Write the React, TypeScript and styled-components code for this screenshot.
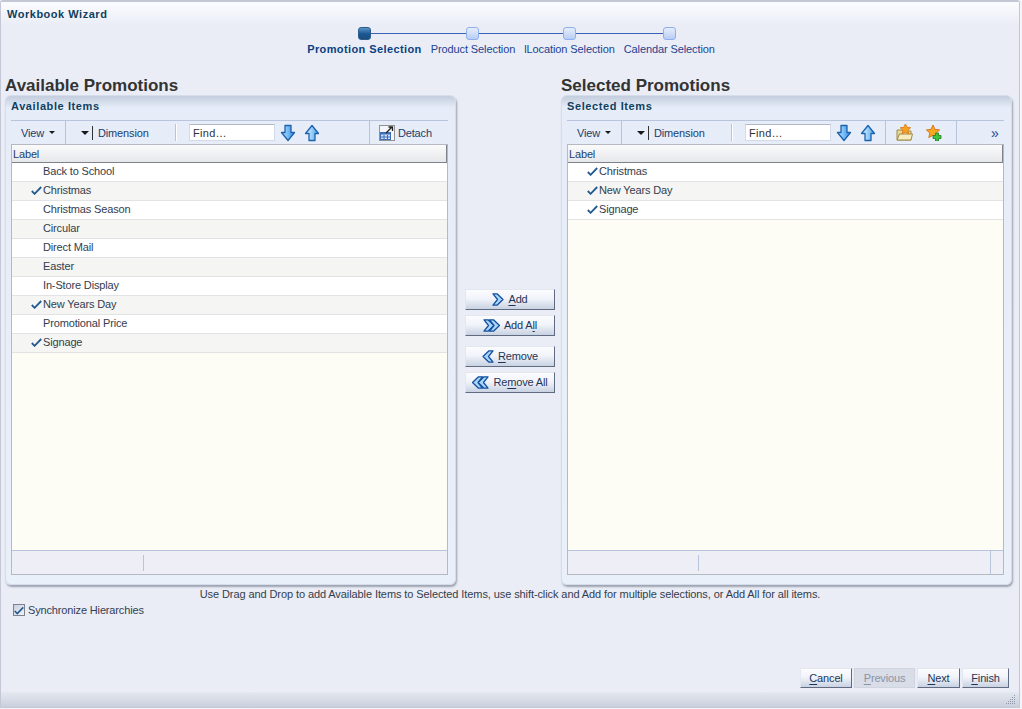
import React from "react";
import styled, { createGlobalStyle } from "styled-components";

const GlobalStyle = createGlobalStyle`
  html, body {
    margin: 0;
    padding: 0;
    background: #f4f5fa;
  }
  body {
    font-family: "Liberation Sans", Arial, sans-serif;
    font-size: 11px;
    letter-spacing: -0.15px;
  }
`;

const ArrowDown = () => (
  <svg width="16" height="18" viewBox="0 0 16 18">
    <defs>
      <linearGradient id="arrowBlue" x1="0" y1="0" x2="1" y2="0">
        <stop offset="0" stopColor="#bfe4ff" />
        <stop offset="1" stopColor="#2f8fe8" />
      </linearGradient>
    </defs>
    <path
      d="M5 1.500h6v7h3.500L8 16.500 1.500 8.500H5z"
      fill="url(#arrowBlue)"
      stroke="#1d62ad"
      strokeWidth="1.3"
      strokeLinejoin="round"
    />
  </svg>
);

const ArrowUp = () => (
  <svg width="16" height="18" viewBox="0 0 16 18">
    <defs>
      <linearGradient id="arrowPale" x1="0" y1="0" x2="1" y2="0">
        <stop offset="0" stopColor="#e2f4ff" />
        <stop offset="1" stopColor="#4ba6f0" />
      </linearGradient>
    </defs>
    <path
      d="M5 16.500h6v-7h3.500L8 1.500 1.500 9.500H5z"
      fill="url(#arrowPale)"
      stroke="#1d62ad"
      strokeWidth="1.3"
      strokeLinejoin="round"
    />
  </svg>
);

const DetachIcon = () => (
  <svg width="16" height="16" viewBox="0 0 16 16">
    <rect x="0.500" y="0.500" width="15" height="15" fill="#f4f6fb" stroke="#333" strokeDasharray="1 1" />
    <rect x="1.500" y="7.500" width="10" height="7" fill="#cfe0f8" stroke="#3c6fb8" />
    <rect x="1.500" y="7.500" width="10" height="2" fill="#3c6fb8" />
    <path d="M5 10v4M8.500 10v4M2 12h9" stroke="#3c6fb8" fill="none" />
    <path d="M7 8l6-6M9.500 2h4v4" stroke="#222" strokeWidth="1.3" fill="none" />
  </svg>
);

const starPath = "M8 1l2 4.400 4.600.5-3.400 3.100 1 4.600L8 11.200 3.800 13.600l1-4.600L1.400 5.900l4.600-.5z";

const StarFolderIcon = () => (
  <svg width="17" height="17" viewBox="0 0 17 17">
    <path d="M1 6h5l1 1h8v9H1z" fill="#e8d89a" stroke="#a08a45" />
    <path d="M1 16l2.500-6H16.500L15 16z" fill="#f6ecc0" stroke="#a08a45" />
    <path d={starPath} transform="translate(3 -1) scale(.8)" fill="#f7a21f" stroke="#d9761a" />
  </svg>
);

const StarAddIcon = () => (
  <svg width="17" height="17" viewBox="0 0 17 17">
    <path d={starPath} fill="#f7a81f" stroke="#d9761a" />
    <path d="M10.500 9h3v2.500H16v3h-2.500V17h-3v-2.500H8v-3h2.500z" fill="#3fc43a" stroke="#1c7d1f" strokeWidth=".8" />
  </svg>
);

const CheckMark = () => (
  <svg width="11" height="9" viewBox="0 0 11 9">
    <path d="M0.800 5l2.800 2.800L10.200 1" stroke="#235a8f" strokeWidth="1.800" fill="none" />
  </svg>
);

const chevron = "M1 .8H5L11 6.500 5 12.200H1L5.500 6.500z";

const ShuttleIcon = ({ count, flip }: { count: number; flip?: boolean }) => (
  <svg
    width={count === 2 ? 17 : 12}
    height="13"
    viewBox={count === 2 ? "0 0 17 13" : "0 0 12 13"}
    style={flip ? { transform: "scaleX(-1)" } : undefined}
  >
    <path d={chevron} fill="#a8d6fa" stroke="#14509f" strokeWidth="1.3" strokeLinejoin="round" />
    {count === 2 && (
      <path
        d={chevron}
        transform="translate(5.500 0)"
        fill="#a8d6fa"
        stroke="#14509f"
        strokeWidth="1.3"
        strokeLinejoin="round"
      />
    )}
  </svg>
);

const Root = styled.div`
  width: 1020px;
  height: 708px;
  box-sizing: border-box;
  display: flex;
  flex-direction: column;
  background: #eaedf6;
  border: 1px solid #c3c7d6;
  border-top-width: 2px;
  border-radius: 3px 3px 0 0;
  color: #2c3a52;
`;

const TitleBar = styled.div`
  height: 23px;
  flex: none;
  box-sizing: border-box;
  padding: 5px 0 0 6px;
  background: linear-gradient(#fbfcfe, #eaedf6);
  color: #0f4060;
  font-weight: 700;
  letter-spacing: 0.52px;
  line-height: 14px;
`;

const Train = styled.div`
  display: flex;
  justify-content: center;
  gap: 9px;
  padding: 2px 0 0 2px;
  height: 49px;
  flex: none;
`;

const Step = styled.div<{ $link?: number }>`
  position: relative;
  display: flex;
  flex-direction: column;
  align-items: center;
  gap: 2px;
  &::after {
    content: "";
    display: ${(p) => (p.$link ? "block" : "none")};
    position: absolute;
    top: 6px;
    left: 50%;
    width: ${(p) => p.$link}px;
    height: 1px;
    background: #3a63b8;
  }
`;

const StepNode = styled.div<{ $active?: boolean }>`
  width: 13px;
  height: 13px;
  box-sizing: border-box;
  border-radius: 3px;
  position: relative;
  z-index: 1;
  border: 1px solid ${(p) => (p.$active ? "#2a5c90" : "#8fb0f0")};
  background: ${(p) =>
    p.$active
      ? "linear-gradient(#5b93c4, #1a5590 55%, #1d4f80)"
      : "linear-gradient(#e6eefc, #b9cdf5)"};
`;

const StepLabel = styled.div<{ $active?: boolean }>`
  color: ${(p) => (p.$active ? "#0b3f80" : "#1d4390")};
  font-weight: ${(p) => (p.$active ? 700 : 400)};
  letter-spacing: ${(p) => (p.$active ? "0.4px" : "-0.1px")};
  line-height: 14px;
  white-space: nowrap;
`;

const Columns = styled.div`
  display: flex;
  padding-left: 4px;
  flex: none;
`;

const Column = styled.div`
  width: 451px;
`;

const Heading = styled.h2`
  margin: 0;
  height: 19px;
  font-size: 17px;
  line-height: 19px;
  font-weight: 700;
  letter-spacing: 0;
  color: #333;
  white-space: nowrap;
`;

const Panel = styled.div`
  height: 490px;
  box-sizing: border-box;
  padding: 0 7px 9px 5px;
  display: flex;
  flex-direction: column;
  background: linear-gradient(#c3cddd, #e6edf8 12px, #e9f0fa);
  border-radius: 6px;
  border: 1px solid #d5dcea;
  box-shadow: 1px 2px 2px #9ca3b0;
`;

const PanelTitle = styled.div`
  height: 25px;
  flex: none;
  box-sizing: border-box;
  padding-top: 3px;
  line-height: 14px;
  font-weight: 700;
  letter-spacing: 0.6px;
  color: #0f4060;
  border-bottom: 1px solid #b7c4dc;
`;

const Toolbar = styled.div`
  height: 23px;
  flex: none;
  display: flex;
  align-items: center;
  color: #1e3c6a;
  white-space: nowrap;
`;

const ToolText = styled.span`
  display: flex;
  align-items: center;
`;

const ViewMenu = styled(ToolText)`
  width: 55px;
  height: 100%;
  box-sizing: border-box;
  padding-left: 10px;
  gap: 5px;
  border-right: 1px solid #b7c4dc;
`;

const Caret = styled.span<{ $small?: boolean }>`
  width: 0;
  height: 0;
  border-left: ${(p) => (p.$small ? 3 : 4)}px solid transparent;
  border-right: ${(p) => (p.$small ? 3 : 4)}px solid transparent;
  border-top: ${(p) => (p.$small ? 3 : 4)}px solid #1a1a1a;
`;

const DimensionMenu = styled(ToolText)`
  width: 109px;
  height: 100%;
  box-sizing: border-box;
  padding-left: 15px;
`;

const Pipe = styled.span`
  width: 1px;
  height: 14px;
  margin: 0 5px 0 3px;
  background: #333;
`;

const ToolSep = styled.span`
  width: 1px;
  height: 17px;
  background: #b7c4dc;
  box-shadow: 1px 0 0 #fff;
`;

const FindInput = styled.div`
  width: 86px;
  height: 17px;
  box-sizing: border-box;
  margin-left: 13px;
  padding-left: 3px;
  background: #fff;
  border: 1px solid #d4dbe8;
  border-top-color: #b0b8c8;
  line-height: 16px;
  letter-spacing: 0.3px;
  color: #333;
`;

const ToolIcon = styled.span<{ $left: number }>`
  display: flex;
  margin-left: ${(p) => p.$left}px;
`;

const FullSep = styled.span<{ $left: number }>`
  width: 1px;
  height: 100%;
  margin-left: ${(p) => p.$left}px;
  background: #b7c4dc;
`;

const Overflow = styled.span`
  margin-left: 34px;
  font-size: 14px;
  line-height: 20px;
  color: #1d4390;
`;

const Table = styled.div`
  flex: 1;
  display: flex;
  flex-direction: column;
  border: 1px solid #b5b9c2;
  min-height: 0;
`;

const TableHead = styled.div`
  height: 18px;
  flex: none;
  box-sizing: border-box;
  padding-left: 1px;
  line-height: 18px;
  background: linear-gradient(#fbfbfc, #e6e7ea);
  border-bottom: 1px solid #7e828a;
  border-right: 1px solid #7e828a;
  color: #24406a;
`;

const TableBody = styled.div`
  flex: 1;
  background: #fdfdf5;
`;

const Row = styled.div`
  height: 19px;
  box-sizing: border-box;
  display: flex;
  align-items: center;
  padding: 0 0 2px 31px;
  background: #fff;
  border-bottom: 1px solid #e2e3e5;
  color: #333d4d;
  white-space: nowrap;
  &:nth-child(even) {
    background: #f5f5f3;
  }
`;

const RowCheck = styled.span`
  display: flex;
  width: 11px;
  height: 9px;
  margin: 0 1px 0 -12px;
  flex: none;
`;

const TableFoot = styled.div`
  height: 23px;
  flex: none;
  display: flex;
  align-items: center;
  background: #eeeff6;
  border-top: 1px solid #b7c4dc;
`;

const FootSep = styled.span<{ $left: number }>`
  width: 1px;
  height: 16px;
  margin-left: ${(p) => p.$left}px;
  background: #b7c4dc;
`;

const FootEdge = styled.span`
  width: 1px;
  height: 100%;
  margin-left: 291px;
  background: #b7c4dc;
`;

const Shuttle = styled.div`
  width: 105px;
  flex: none;
  box-sizing: border-box;
  padding: 213px 0 0 9px;
  display: flex;
  flex-direction: column;
`;

const Button = styled.div<{ $width?: number; $disabled?: boolean }>`
  box-sizing: border-box;
  height: 20px;
  padding-bottom: 1px;
  display: flex;
  align-items: center;
  justify-content: center;
  gap: 4px;
  width: ${(p) => (p.$width ? `${p.$width}px` : "auto")};
  color: ${(p) => (p.$disabled ? "#8a93a6" : "#1f3557")};
  background: ${(p) =>
    p.$disabled ? "#d8dde8" : "linear-gradient(#fbfcfe, #f1f4fa 45%, #c9d2e2)"};
  border: 1px solid ${(p) => (p.$disabled ? "#cfd4de" : "#e3e7ef")};
  border-right-color: ${(p) => (p.$disabled ? "#cfd4de" : "#5f6b80")};
  border-bottom-color: ${(p) => (p.$disabled ? "#cfd4de" : "#5f6b80")};
  white-space: nowrap;
  u {
    text-underline-offset: 2px;
  }
`;

const ShuttleButton = styled(Button)`
  width: 90px;
  height: 21px;
`;

const ShuttleGroup = styled.div`
  display: flex;
  flex-direction: column;
  gap: 5px;
  margin-bottom: 10px;
`;

const Hint = styled.div`
  margin-top: 2px;
  text-align: center;
  line-height: 14px;
  letter-spacing: -0.09px;
  color: #333d4d;
  white-space: nowrap;
`;

const SyncRow = styled.div`
  margin: 2px 0 0 12px;
  display: flex;
  align-items: center;
  gap: 3px;
  line-height: 14px;
  color: #333d55;
`;

const CheckBox = styled.span`
  width: 12px;
  height: 12px;
  box-sizing: border-box;
  display: flex;
  align-items: center;
  justify-content: center;
  border: 1px solid #7d8290;
  background: linear-gradient(135deg, #c9cfe0, #f2f3f8);
`;

const Actions = styled.div`
  margin-top: auto;
  display: flex;
  justify-content: flex-end;
  gap: 2px;
  padding: 0 10px 4px 0;
`;

const BottomBar = styled.div`
  height: 15px;
  flex: none;
  position: relative;
  background: linear-gradient(#e4e8f0, #c9cfdc);
`;

const Grip = styled.svg`
  position: absolute;
  right: 3px;
  bottom: 2px;
`;

type ItemRow = { label: string; checked?: boolean };

const available: ItemRow[] = [
  { label: "Back to School" },
  { label: "Christmas", checked: true },
  { label: "Christmas Season" },
  { label: "Circular" },
  { label: "Direct Mail" },
  { label: "Easter" },
  { label: "In-Store Display" },
  { label: "New Years Day", checked: true },
  { label: "Promotional Price" },
  { label: "Signage", checked: true },
];

const selected: ItemRow[] = [
  { label: "Christmas", checked: true },
  { label: "New Years Day", checked: true },
  { label: "Signage", checked: true },
];

const steps = [
  { label: "Promotion Selection", link: 109, active: true },
  { label: "Product Selection", link: 95 },
  { label: "lLocation Selection", link: 99 },
  { label: "Calendar Selection" },
];

const Rows = ({ items }: { items: ItemRow[] }) => (
  <TableBody>
    {items.map((item) => (
      <Row key={item.label}>
        <RowCheck>{item.checked && <CheckMark />}</RowCheck>
        <span>{item.label}</span>
      </Row>
    ))}
  </TableBody>
);

const CommonTools = () => (
  <>
    <ViewMenu>
      View <Caret $small />
    </ViewMenu>
    <DimensionMenu>
      <Caret />
      <Pipe />
      Dimension
    </DimensionMenu>
    <ToolSep />
    <FindInput>Find…</FindInput>
    <ToolIcon $left={5}>
      <ArrowDown />
    </ToolIcon>
    <ToolIcon $left={8}>
      <ArrowUp />
    </ToolIcon>
  </>
);

export default function App() {
  return (
    <Root>
      <GlobalStyle />
      <TitleBar>Workbook Wizard</TitleBar>
      <Train>
        {steps.map((s) => (
          <Step key={s.label} $link={s.link}>
            <StepNode $active={s.active} />
            <StepLabel $active={s.active}>{s.label}</StepLabel>
          </Step>
        ))}
      </Train>
      <Columns>
        <Column>
          <Heading>Available Promotions</Heading>
          <Panel>
            <PanelTitle>Available Items</PanelTitle>
            <Toolbar>
              <CommonTools />
              <FullSep $left={49} />
              <ToolIcon $left={9}>
                <DetachIcon />
              </ToolIcon>
              <ToolText>&nbsp;Detach</ToolText>
            </Toolbar>
            <Table>
              <TableHead>Label</TableHead>
              <Rows items={available} />
              <TableFoot>
                <FootSep $left={131} />
              </TableFoot>
            </Table>
          </Panel>
        </Column>
        <Shuttle>
          <ShuttleGroup>
            <ShuttleButton>
              <ShuttleIcon count={1} />
              <span>
                <u>A</u>dd
              </span>
            </ShuttleButton>
            <ShuttleButton>
              <ShuttleIcon count={2} />
              <span>
                Add A<u>l</u>l
              </span>
            </ShuttleButton>
          </ShuttleGroup>
          <ShuttleGroup>
            <ShuttleButton>
              <ShuttleIcon count={1} flip />
              <span>
                <u>R</u>emove
              </span>
            </ShuttleButton>
            <ShuttleButton>
              <ShuttleIcon count={2} flip />
              <span>
                Re<u>m</u>ove All
              </span>
            </ShuttleButton>
          </ShuttleGroup>
        </Shuttle>
        <Column>
          <Heading>Selected Promotions</Heading>
          <Panel>
            <PanelTitle>Selected Items</PanelTitle>
            <Toolbar>
              <CommonTools />
              <FullSep $left={9} />
              <ToolIcon $left={10}>
                <StarFolderIcon />
              </ToolIcon>
              <ToolIcon $left={12}>
                <StarAddIcon />
              </ToolIcon>
              <FullSep $left={14} />
              <Overflow>»</Overflow>
            </Toolbar>
            <Table>
              <TableHead>Label</TableHead>
              <Rows items={selected} />
              <TableFoot>
                <FootSep $left={130} />
                <FootEdge />
              </TableFoot>
            </Table>
          </Panel>
        </Column>
      </Columns>
      <Hint>
        Use Drag and Drop to add Available Items to Selected Items, use shift-click and Add for
        multiple selections, or Add All for all items.
      </Hint>
      <SyncRow>
        <CheckBox>
          <CheckMark />
        </CheckBox>
        Synchronize Hierarchies
      </SyncRow>
      <Actions>
        <Button $width={52}>
          <span>
            <u>C</u>ancel
          </span>
        </Button>
        <Button $width={61} $disabled>
          <span>
            <u>P</u>revious
          </span>
        </Button>
        <Button $width={43}>
          <span>
            <u>N</u>ext
          </span>
        </Button>
        <Button $width={47}>
          <span>
            <u>F</u>inish
          </span>
        </Button>
      </Actions>
      <BottomBar>
        <Grip width="11" height="11" viewBox="0 0 11 11">
          <path
            d="M9 1h1M7 3h1M9 3h1M5 5h1M7 5h1M9 5h1M3 7h1M5 7h1M7 7h1M9 7h1M1 9h1M3 9h1M5 9h1M7 9h1M9 9h1"
            stroke="#8f97a8"
            transform="translate(0 .5)"
          />
        </Grip>
      </BottomBar>
    </Root>
  );
}
